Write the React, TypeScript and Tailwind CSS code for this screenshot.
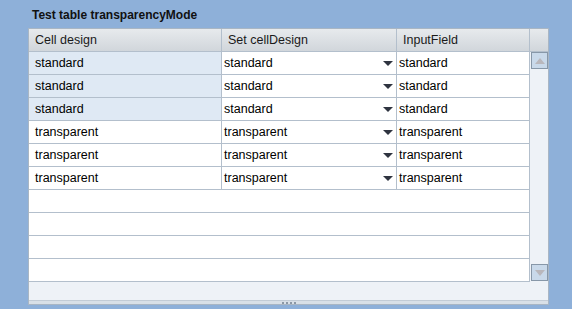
const rows = [
  { design: "standard", mode: "standard", selected: true },
  { design: "standard", mode: "standard", selected: true },
  { design: "standard", mode: "standard", selected: true },
  { design: "transparent", mode: "transparent", selected: false },
  { design: "transparent", mode: "transparent", selected: false },
  { design: "transparent", mode: "transparent", selected: false },
];

function DropArrow() {
  return (
    <svg width="10" height="5" viewBox="0 0 10 5" className="shrink-0">
      <path d="M0 0h10L5 5z" fill="#2f3440" />
    </svg>
  );
}

function ScrollButton({ up }: { up?: boolean }) {
  return (
    <div className="flex h-[17px] w-[17px] items-center justify-center border border-[#8797a8] bg-[#c9d9ea]">
      <svg width="10" height="6" viewBox="0 0 10 6" className="shrink-0">
        <path d={up ? "M0 6L5 0 10 6z" : "M0 0h10L5 6z"} fill="#b9b7bc" />
      </svg>
    </div>
  );
}

export default function App() {
  return (
    <div className="h-[309px] w-[572px] overflow-hidden bg-[#8eb0d9] font-['Liberation_Sans',Arial,sans-serif] text-[12.5px] text-black">
      <div className="h-[28px] pl-[32px] pt-[8px] text-[12px] font-bold leading-[14px] text-[#111]">
        Test table transparencyMode
      </div>

      <div className="ml-[28px] w-[521px] border border-[#a9b6c4] bg-[#eef2f7]">
        {/* header */}
        <div className="flex h-[23px] border-b border-[#b3bfcc] bg-linear-to-b from-[#e7eaed] to-[#d1d6db] leading-[22px] text-[#1a1a1a]">
          <div className="w-[193px] border-r border-[#b3bfcc] pl-[6px]">Cell design</div>
          <div className="w-[175px] border-r border-[#b3bfcc] pl-[6px]">Set cellDesign</div>
          <div className="w-[133px] border-r border-[#b3bfcc] pl-[6px]">InputField</div>
          <div className="flex-1" />
        </div>

        <div className="flex">
          <div className="w-[501px] border-r border-[#b3bfcc]">
            {rows.map((r, i) => (
              <div key={i} className="flex h-[23px] border-b border-[#b3bfcc] bg-white leading-[22px]">
                <div
                  className={`w-[193px] border-r border-[#b3bfcc] pl-[6px] ${
                    r.selected ? "bg-[#dfe9f4]" : "bg-white"
                  }`}
                >
                  {r.design}
                </div>
                <div className="flex w-[175px] items-center justify-between border-r border-[#b3bfcc] pl-[2px] pr-[3px]">
                  <span>{r.mode}</span>
                  <DropArrow />
                </div>
                <div className="w-[132px] pl-[2px]">{r.mode}</div>
              </div>
            ))}
            {[0, 1, 2, 3].map((i) => (
              <div key={i} className="h-[23px] border-b border-[#b3bfcc] bg-white" />
            ))}
          </div>
          <div className="flex h-[230px] flex-1 flex-col items-center justify-between pb-[1px] pl-[1px]">
            <ScrollButton up />
            <ScrollButton />
          </div>
        </div>

        <div className="h-[18px]" />
        <div className="flex h-[4px] items-center justify-center gap-[2px] border-t border-[#c3ccd6] bg-[#d9e0e7]">
          {[0, 1, 2, 3].map((i) => (
            <span key={i} className="h-[2px] w-[2px] bg-[#8c98a6]" />
          ))}
        </div>
      </div>
    </div>
  );
}
